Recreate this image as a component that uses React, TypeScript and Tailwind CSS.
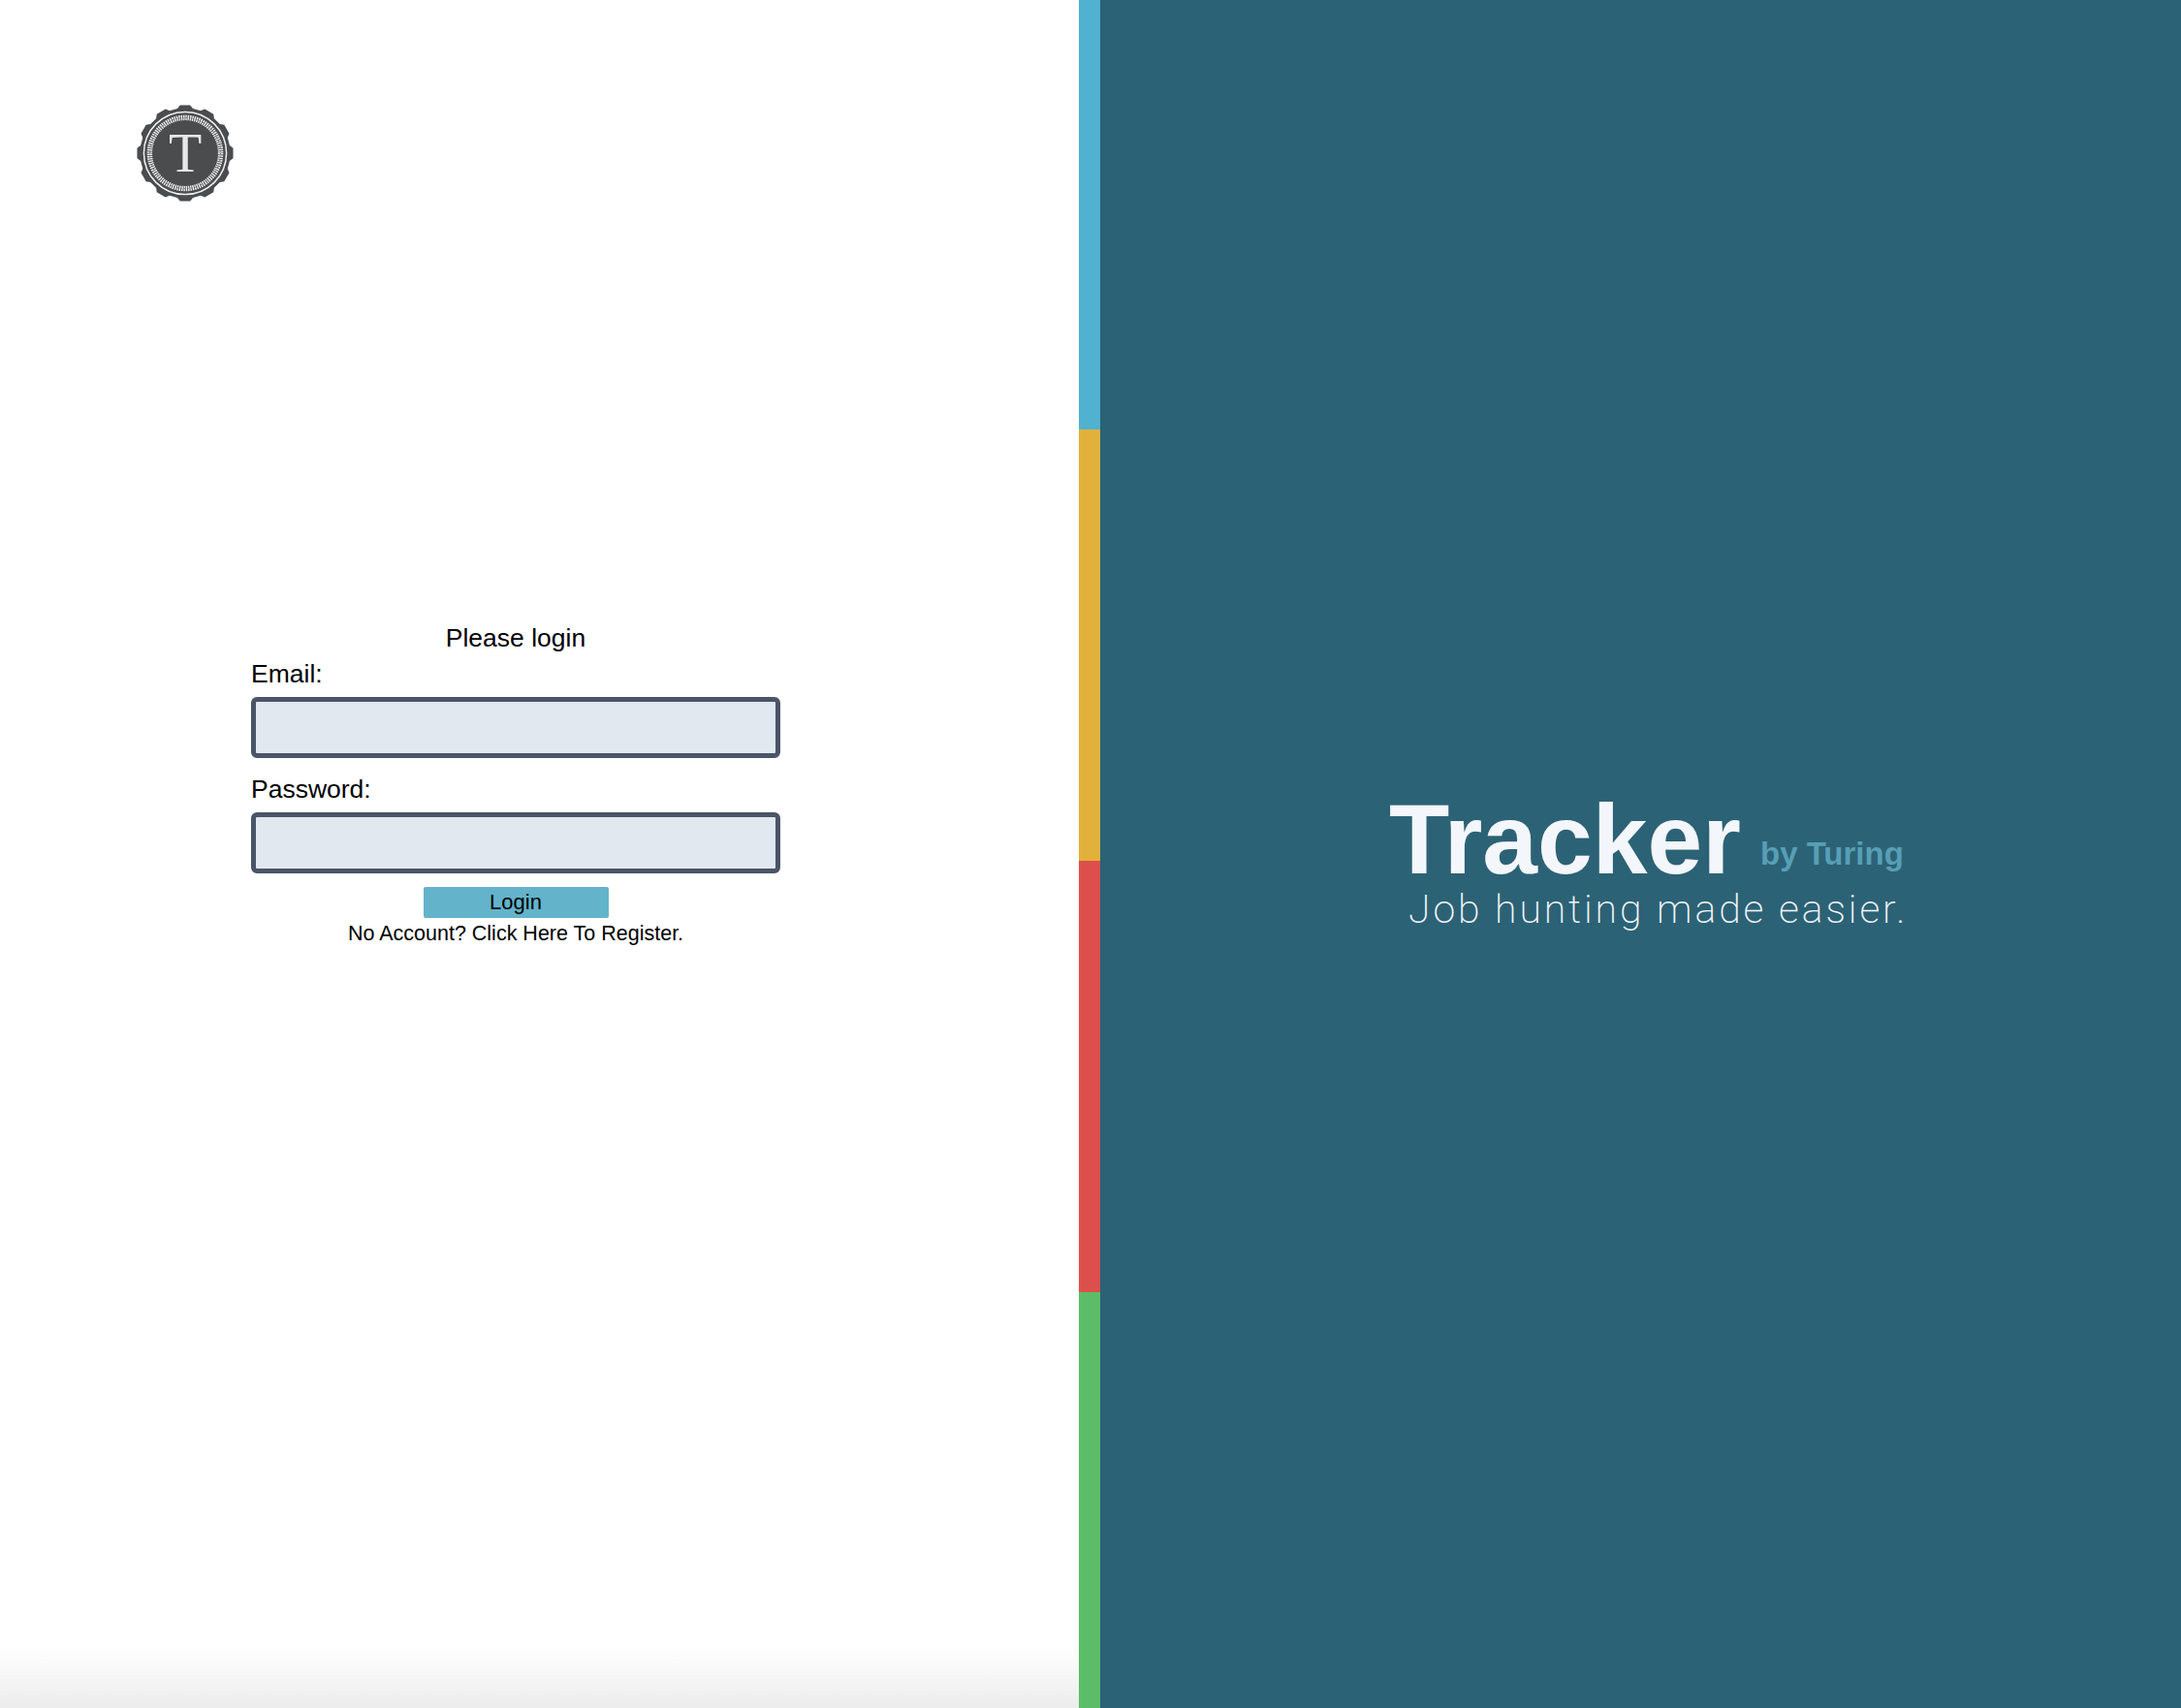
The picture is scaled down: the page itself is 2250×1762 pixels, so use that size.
import React from 'react';

const stripes = ['h-[443px] bg-[#50b1d1]', 'h-[445px] bg-[#e2b13c]', 'h-[445px] bg-[#dd4f4d]', 'flex-1 bg-[#5cbd68]'];

// seal edge: 12 rounded lobes with shallow notches between
const sealEdge = () => {
  const lobes = 12;
  const step = (Math.PI * 2) / lobes;
  const at = (a: number, r: number) => `${(50 + r * Math.cos(a)).toFixed(2)} ${(50 + r * Math.sin(a)).toFixed(2)}`;
  let d = '';
  for (let i = 0; i < lobes; i++) {
    const a = -Math.PI / 2 + i * step;
    d += `${i === 0 ? 'M' : 'L'}${at(a - 0.2 * step, 49.8)} `;
    d += `L${at(a + 0.2 * step, 49.8)} `;
    d += `L${at(a + 0.33 * step, 46.6)} `;
    d += `L${at(a + 0.67 * step, 46.6)} `;
  }
  return d + 'Z';
};

const Logo = () => (
  <svg viewBox="0 0 100 100" className="w-[100px] h-[100px] block">
    <path d={sealEdge()} fill="#4b4c4e" />
    <circle cx="50" cy="50" r="42.6" fill="none" stroke="#f0f0f0" strokeWidth="1.5" />
    {/* braid ring */}
    <circle cx="50" cy="50" r="36.6" fill="none" stroke="#e8e8e8" strokeWidth="5.4" strokeDasharray="1.5 0.8" />
    <circle cx="50" cy="50" r="36.6" fill="none" stroke="#4b4c4e" strokeWidth="0.9" strokeDasharray="1.2 2.4" />
    <text x="50" y="69" textAnchor="middle" fontSize="56" fill="#e8e8e8" fontFamily="'Liberation Serif', serif">T</text>
  </svg>
);

const Field = ({ label, type }: { label: string; type: string }) => (
  <div>
    <label className="block text-[26.5px] leading-[30px] text-black">{label}</label>
    <input type={type} className="mt-[9px] block w-[546px] h-[63px] rounded-[6px] border-[5px] border-[#4a5568] bg-[#e2e8f0]" />
  </div>
);

export default function App() {
  return (
    <div className="flex w-full h-[1762px] overflow-hidden bg-white font-['Liberation_Sans',Arial,sans-serif]">
      <div className="w-[1113px] h-full bg-[linear-gradient(to_bottom,#ffffff_0%,#ffffff_96.5%,#ececec_100%)]">
        <div className="pl-[141px] pt-[108px]">
          <Logo />
        </div>
        <form className="ml-[259px] mt-[434px] w-[546px] flex flex-col">
          <h2 className="text-center text-[26.5px] leading-[32px] font-normal text-black">Please login</h2>
          <div className="mt-[6px] flex flex-col gap-[17px]">
            <Field label="Email:" type="email" />
            <Field label="Password:" type="password" />
          </div>
          <button type="button" className="mx-auto mt-[14px] w-[191px] h-[32px] rounded-[2px] bg-[#63b3cb] text-[22px] leading-[32px] text-black">
            Login
          </button>
          <p className="text-center text-[21.5px] leading-[33px] text-black">No Account? Click Here To Register.</p>
        </form>
      </div>
      <div className="w-[22px] h-full flex flex-col">
        {stripes.map((s) => (
          <div key={s} className={s} />
        ))}
      </div>
      <div className="flex-1 h-full bg-[#2c6275]">
        <div className="pt-[817px] pl-[298px]">
          <div className="flex items-end">
            <span className="text-[102px] leading-[98px] font-bold text-[#f3f6fb]">Tracker</span>
            <span className="ml-[20px] mb-[15px] text-[33px] leading-[38px] font-bold text-[#579fb6]">by Turing</span>
          </div>
          <p className="ml-[20px] text-[41px] leading-[46px] tracking-[2.85px] font-extralight text-[#f3f6fb] font-['Roboto',sans-serif]">
            Job hunting made easier.
          </p>
        </div>
      </div>
    </div>
  );
}
